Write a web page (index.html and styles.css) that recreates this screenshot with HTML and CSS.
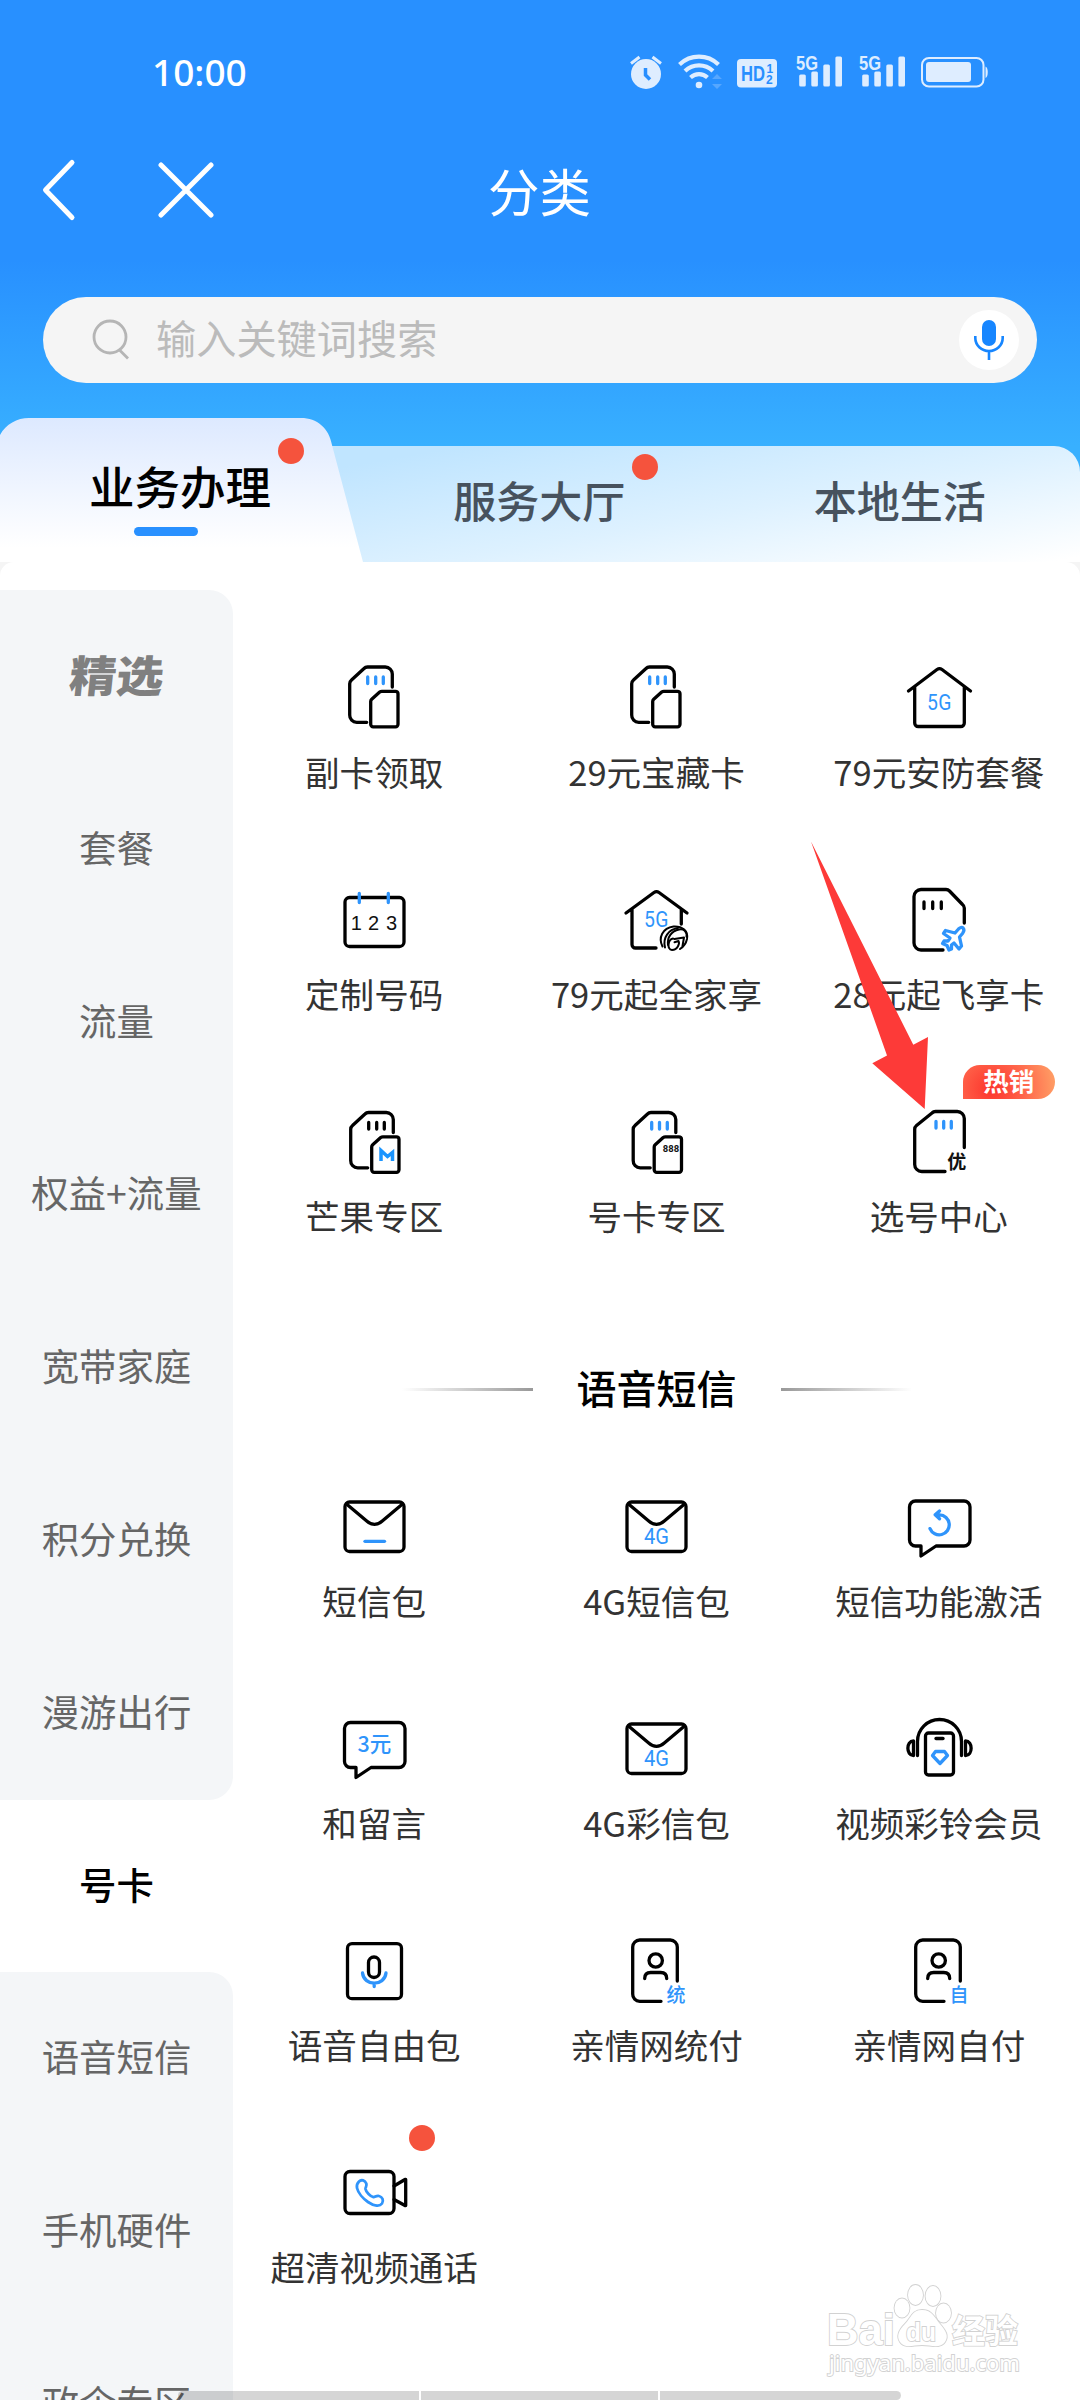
FILE: index.html
```html
<!DOCTYPE html>
<html lang="zh-CN">
<head>
  <meta charset="UTF-8">
  <title>分类</title>
  <link rel="stylesheet" href="styles.css">
</head>
<body>
  <!-- Shared icon shapes -->
  <svg class="sprite" width="0" height="0">
    <symbol id="sim-double" viewBox="0 0 72 72">
      <path d="M54.3 26V13a7 7 0 0 0-7-7H29.5a5 5 0 0 0-3.5 1.500L13.500 19a5 5 0 0 0-1.800 3.800V54a7 7 0 0 0 7 7.300h10" />
      <path d="M44 30.300h13.500a2.500 2.500 0 0 1 2.500 2.500v30.500a2.500 2.500 0 0 1-2.500 2.500H35.200a2.500 2.500 0 0 1-2.500-2.500V40.500a3 3 0 0 1 1-2.200l8-7.200a3.500 3.500 0 0 1 2.300-.8z" />
    </symbol>
    <symbol id="envelope" viewBox="0 0 72 72">
      <rect x="7" y="12" width="59" height="49.500" rx="4.500" />
      <path d="M8.500 14 29 31.300c4.500 4 10.500 4 15 0L64.500 14" />
    </symbol>
    <symbol id="bubble" viewBox="0 0 72 72">
      <path d="M12.500 11h48.500a6 6 0 0 1 6 6v33a6 6 0 0 1-6 6H33L18 66V56h-5.500a6 6 0 0 1-6-6V17a6 6 0 0 1 6-6z" />
    </symbol>
    <symbol id="person-card" viewBox="0 0 72 72">
      <path d="M57.300 47V13a7 7 0 0 0-7-7H19.700a7 7 0 0 0-7 7v47a7 7 0 0 0 7 7.300H41" />
      <circle cx="35.700" cy="26.500" r="6.700" />
      <path d="M24.700 44.500c0-4 2.500-6 6-6h10c3.500 0 6 2 6 6" />
    </symbol>
  </svg>

  <div class="page">
    <header class="header">
      <!-- Status bar -->
      <div class="status-bar">
        <span class="time">10:00</span>
        <div class="status-icons">
          <svg class="alarm" width="32" height="35" viewBox="0 0 32 35">
            <circle cx="16" cy="20" r="15" />
            <path d="M1 9.500 9.500 3M31 9.500 22.500 3" fill="none" stroke="#deedff" stroke-width="3" />
            <path d="M15.500 14v7l4.500 4.500" fill="none" stroke="#288fff" stroke-width="3.500" />
          </svg>
          <svg class="wifi" width="44" height="35" viewBox="0 0 44 35">
            <g fill="none" stroke="#deedff" stroke-width="4.200">
              <path d="M1.500 10.500c11-10.500 28-10.500 39 0" />
              <path d="M7 17c8-7.500 20-7.500 28 0" />
              <path d="M12.500 23.500c5-4.500 12-4.500 17 0" />
            </g>
            <circle cx="21" cy="31" r="3.300" />
            <path d="m34 25 5-5 5 5zM34 30h10l-5 5z" opacity=".25" />
          </svg>
          <svg class="hd" width="40" height="29" viewBox="0 0 40 29">
            <rect width="40" height="28.500" rx="4" />
            <g fill="#288fff" font-weight="bold">
              <text x="4" y="22" font-size="22" textLength="24" lengthAdjust="spacingAndGlyphs">HD</text>
              <text x="29.500" y="13.500" font-size="12">1</text>
              <text x="29" y="25" font-size="12">2</text>
            </g>
          </svg>
          <svg class="signal" width="46" height="33" viewBox="0 0 46 33">
            <text x="0" y="15.500" font-size="20" font-weight="bold" textLength="22" lengthAdjust="spacingAndGlyphs">5G</text>
            <rect x="3.200" y="20.500" width="6.600" height="12" rx="1.500" />
            <rect x="15.300" y="17.500" width="6.600" height="15" rx="1.500" />
            <rect x="27.300" y="10.500" width="6.600" height="22" rx="1.500" />
            <rect x="39.400" y="2.500" width="6.600" height="30" rx="1.500" />
          </svg>
          <svg class="signal second" width="46" height="33" viewBox="0 0 46 33">
            <text x="0" y="15.500" font-size="20" font-weight="bold" textLength="22" lengthAdjust="spacingAndGlyphs">5G</text>
            <rect x="3.200" y="20.500" width="6.600" height="12" rx="1.500" />
            <rect x="15.300" y="17.500" width="6.600" height="15" rx="1.500" />
            <rect x="27.300" y="10.500" width="6.600" height="22" rx="1.500" />
            <rect x="39.400" y="2.500" width="6.600" height="30" rx="1.500" />
          </svg>
          <svg class="battery" width="68" height="31" viewBox="0 0 68 31">
            <rect x="1" y="1" width="61.500" height="28.500" rx="7" fill="none" stroke="#deedff" stroke-width="2" />
            <rect x="5" y="5" width="45" height="20" rx="3" />
            <path d="M64.500 9.500c3 1 3 10.500 0 11.500z" />
          </svg>
        </div>
      </div>

      <!-- Title bar -->
      <div class="title-bar">
        <svg class="back" width="34" height="64" viewBox="0 0 34 64" fill="none" stroke="#fff" stroke-width="5" stroke-linecap="round" stroke-linejoin="round">
          <path d="M30 4.500 3.500 32 30 59.500" />
        </svg>
        <svg class="close" width="56" height="56" viewBox="0 0 56 56" fill="none" stroke="#fff" stroke-width="5" stroke-linecap="round">
          <path d="m3 3 50 50M53 3 3 53" />
        </svg>
        <h1>分类</h1>
      </div>

      <!-- Search -->
      <div class="search">
        <svg width="38" height="42" viewBox="0 0 38 42" fill="none" stroke="#b5b5b5" stroke-width="2.800">
          <circle cx="18" cy="18" r="16" />
          <path d="m27.500 31 8.500 8.500" />
        </svg>
        <span class="placeholder">输入关键词搜索</span>
        <span class="mic">
          <svg width="32" height="42" viewBox="0 0 32 42">
            <rect x="9" y="1" width="14" height="26" rx="7" fill="#1786ff" />
            <path d="M2.300 17v2a13.700 13 0 0 0 27.400 0v-2M16 32v9" fill="none" stroke="#1786ff" stroke-width="2.600" />
          </svg>
        </span>
      </div>

      <!-- Tabs -->
      <nav class="tabs">
        <div class="tab-active">
          <span>业务办理</span>
          <i class="underline"></i>
          <i class="dot"></i>
        </div>
        <div class="tabs-rest">
          <div class="tab">服务大厅<i class="dot"></i></div>
          <div class="tab">本地生活</div>
        </div>
      </nav>
    </header>

    <main class="content">
      <aside class="sidebar">
        <div class="side-item first"><b>精选</b></div>
        <div class="side-item">套餐</div>
        <div class="side-item">流量</div>
        <div class="side-item">权益+流量</div>
        <div class="side-item">宽带家庭</div>
        <div class="side-item">积分兑换</div>
        <div class="side-item before">漫游出行</div>
        <div class="side-item current">号卡</div>
        <div class="side-item after">语音短信</div>
        <div class="side-item">手机硬件</div>
        <div class="side-item">政企专区</div>
      </aside>

      <section class="services">
        <div class="grid">
          <div class="item">
            <svg class="icon" viewBox="0 0 72 72">
              <use href="#sim-double" />
              <path class="blue" d="M29.700 16v6.500M37.700 16v6.500M45.300 16v6.500" />
            </svg>
            <span>副卡领取</span>
          </div>
          <div class="item">
            <svg class="icon" viewBox="0 0 72 72">
              <use href="#sim-double" />
              <path class="blue" d="M29.700 16v6.500M37.700 16v6.500M45.300 16v6.500" />
            </svg>
            <span>29元宝藏卡</span>
          </div>
          <div class="item">
            <svg class="icon" viewBox="0 0 72 72">
              <path d="M5.500 30 34 8.500q2.500-1.800 5 0L67.500 30M11.700 26v36a3.500 3.500 0 0 0 3.500 3.500h42.600a3.500 3.500 0 0 0 3.500-3.500V26" />
              <text class="t-blue" x="36.500" y="49" font-size="21.500" letter-spacing=".5" textLength="25" lengthAdjust="spacingAndGlyphs">5G</text>
            </svg>
            <span>79元安防套餐</span>
          </div>
          <div class="item">
            <svg class="icon" viewBox="0 0 72 72">
              <rect x="7" y="14.500" width="59" height="49" rx="4.500" />
              <path class="blue" d="M21.300 10.500v9M50.300 10.500v9" />
              <g class="t-black t-wide" font-size="20">
                <text x="18.200" y="46.500">1</text>
                <text x="35.500" y="46.500">2</text>
                <text x="53.500" y="46.500">3</text>
              </g>
            </svg>
            <span>定制号码</span>
          </div>
          <div class="item">
            <svg class="icon" viewBox="0 0 72 72">
              <path d="M6 30 34 9.500q2.500-1.800 5 0L67 30M12 26v35.500a3.500 3.500 0 0 0 3.500 3.500H36M61.300 26v15" />
              <text class="t-blue" x="36.500" y="44" font-size="21.500" letter-spacing=".5" textLength="25" lengthAdjust="spacingAndGlyphs">5G</text>
              <g stroke-width="2">
                <path d="M42.500 63.500c-4.500-9 0-18.500 11-20 9-.5 15 4.500 13.500 12.500-1 4.500-3 7.500-7 10" />
                <path d="M45 64.500c-2.500-10 3.500-18 13-19.500" />
                <path d="M48 62c-1-8 3.500-14 11-15.500 5-1 8 2 7.500 7" />
                <path d="M53 55.500c-5 1-6.500 11-1 11.500 5.500 0 8-6.500 6.500-9l-4 1.200M54.500 56l9.500-1.500-1.500 8.500" />
              </g>
            </svg>
            <span>79元起全家享</span>
          </div>
          <div class="item">
            <svg class="icon" viewBox="0 0 72 72">
              <path d="M61.300 40V25a4.500 4.500 0 0 0-1.800-3.500L46.500 8a5 5 0 0 0-3.500-1.500H18a7 7 0 0 0-7 7V60a7 7 0 0 0 7 7h22" />
              <path d="M21 19v6.500M29.700 19v6.500M38.300 19v6.500" />
              <path class="blue" d="M60 45c1.500 1.500 1 3.500-.5 5.500L56.500 54l2 9-2.500 3-5-6-2.500 2v4l-2.500 1-2-4.500-4.500-2 1.500-2.500h4l2-3-6.500-4.500 2-3 9.500 2.500 3.500-4c1.500-1.500 3.500-2 4.500-1z" />
            </svg>
            <span>28元起飞享卡</span>
          </div>
          <div class="item">
            <svg class="icon" viewBox="0 0 72 72">
              <use href="#sim-double" x="1" y="1.500" />
              <path d="M30.700 17.500V24M38.700 17.500V24M46.300 17.500V24" />
              <path d="M43 56V45.500l6.500 6 5-4V56" fill="none" stroke="#1b95ff" stroke-width="3.500" stroke-linecap="butt" stroke-linejoin="miter" />
            </svg>
            <span>芒果专区</span>
          </div>
          <div class="item">
            <svg class="icon" viewBox="0 0 72 72">
              <use href="#sim-double" x="1.500" y="1.500" />
              <path class="blue" d="M31.700 17.500V24M39.500 17.500V24M47.300 17.500V24" />
              <text class="t-black" x="51" y="47" font-size="9.500" font-weight="bold">888</text>
            </svg>
            <span>号卡专区</span>
          </div>
          <div class="item">
            <em class="hot">热销</em>
            <svg class="icon" viewBox="0 0 72 72">
              <path d="M61.300 42.500V13.500a7 7 0 0 0-7-7H32.500A5 5 0 0 0 29 8L13.500 20.500a5 5 0 0 0-1.800 3.800V59.500a7 7 0 0 0 7 7H42" />
              <path class="blue" d="M33 16.500V23M40.700 16.500V23M48.300 16.500V23" />
              <text class="t-black cjk strong" x="53.700" y="64" font-size="19">优</text>
            </svg>
            <span>选号中心</span>
          </div>
        </div>

        <h2 class="section-title"><i class="line left"></i>语音短信<i class="line right"></i></h2>

        <div class="grid">
          <div class="item">
            <svg class="icon" viewBox="0 0 72 72">
              <use href="#envelope" />
              <path class="blue" d="M27 51.300h19.500" />
            </svg>
            <span>短信包</span>
          </div>
          <div class="item">
            <svg class="icon" viewBox="0 0 72 72">
              <use href="#envelope" />
              <text class="t-blue" x="36.500" y="54" font-size="21.500" textLength="25" lengthAdjust="spacingAndGlyphs">4G</text>
            </svg>
            <span>4G短信包</span>
          </div>
          <div class="item">
            <svg class="icon" viewBox="0 0 72 72">
              <use href="#bubble" />
              <path class="blue" d="M27 38.600a10 10 0 1 0 9.500-13.800h-4M36.500 21l-4.300 3.800 4.300 4" />
            </svg>
            <span>短信功能激活</span>
          </div>
          <div class="item">
            <svg class="icon" viewBox="0 0 72 72">
              <use href="#bubble" y="-.5" />
              <text class="t-blue cjk" x="36.500" y="39.500" font-size="21.500">3元</text>
            </svg>
            <span>和留言</span>
          </div>
          <div class="item">
            <svg class="icon" viewBox="0 0 72 72">
              <use href="#envelope" />
              <text class="t-blue" x="36.500" y="54" font-size="21.500" textLength="25" lengthAdjust="spacingAndGlyphs">4G</text>
            </svg>
            <span>4G彩信包</span>
          </div>
          <div class="item">
            <svg class="icon" viewBox="0 0 72 72">
              <path d="M14.500 43.500V29.500a22 22 0 0 1 44 0v14" />
              <path d="M10.500 29v14.500c-7.500 0-7.500-14.500 0-14.500zM62.500 29v14.500c7.500 0 7.500-14.500 0-14.500z" />
              <rect x="22.500" y="21" width="28" height="42" rx="3" />
              <path d="M33 26.500h7" />
              <path class="blue" d="M32.500 39.500h9l3 4L37 51.500 29.500 43.500z" />
            </svg>
            <span>视频彩铃会员</span>
          </div>
          <div class="item">
            <svg class="icon" viewBox="0 0 72 72">
              <rect x="9.500" y="9.700" width="54" height="55" rx="4.500" />
              <rect x="30.500" y="23" width="11" height="20.500" rx="5.500" />
              <path class="blue" d="M24.500 39c1.500 13.500 22 13.500 23.500 0M36.200 49.500v3" />
            </svg>
            <span>语音自由包</span>
          </div>
          <div class="item">
            <svg class="icon" viewBox="0 0 72 72">
              <use href="#person-card" />
              <text class="t-blue cjk" x="56" y="67.500" font-size="19">统</text>
            </svg>
            <span>亲情网统付</span>
          </div>
          <div class="item">
            <svg class="icon" viewBox="0 0 72 72">
              <use href="#person-card" />
              <text class="t-blue cjk" x="56" y="67.500" font-size="19">自</text>
            </svg>
            <span>亲情网自付</span>
          </div>
          <div class="item">
            <i class="dot"></i>
            <svg class="icon" viewBox="0 0 72 72">
              <rect x="7" y="15.500" width="49" height="42" rx="5" />
              <path d="m56 30 11-6.500h.7v26H67L56 43.500" />
              <path class="blue thin" d="M21 25.500c2.500-2.500 6-1 7.300 2 .8 2.500-1 3.800-.8 5.500.5 3 5 7.500 8 8.200 1.500.2 3-2 5.500-1.200 3.500 1 5 4.500 3 7.500-3 4-9.500 1.500-14-1.500-5-3.500-10-9.500-11-14-.5-2.500 0-4.500 2-6.500z" />
            </svg>
            <span>超清视频通话</span>
          </div>
        </div>
      </section>
    </main>

    <!-- Pointer -->
    <svg class="pointer" width="120" height="270" viewBox="811 842 120 270">
      <path d="M811 842.500 913.300 1045.700 928 1038 924.700 1110 872.300 1064.300 887 1056.400z" fill="#fd3a38" />
    </svg>

    <!-- Watermark -->
    <svg class="watermark" width="210" height="100" viewBox="820 2280 210 100">
      <g fill="#fff" stroke="#d2d2d2" stroke-width="1.800" paint-order="stroke">
        <text x="827" y="2345" font-size="45" font-weight="bold" textLength="68" lengthAdjust="spacingAndGlyphs">Bai</text>
        <ellipse cx="902" cy="2308" rx="7.500" ry="9.500" />
        <ellipse cx="915.500" cy="2295" rx="7.500" ry="10" />
        <ellipse cx="933" cy="2296" rx="7.500" ry="10" />
        <ellipse cx="943.500" cy="2313" rx="7.500" ry="9.500" />
        <path d="M922 2310c10 0 13 8 18 14 6 7 9 12 5 18-5 7-14 3-23 3s-17 4-22-3c-4-6-1-12 5-18 6-6 7-14 17-14z" />
        <text x="906" y="2341" font-size="26" font-weight="bold" textLength="30" lengthAdjust="spacingAndGlyphs">du</text>
        <text class="cjk-mark" x="952" y="2343" font-size="33" font-weight="bold">经验</text>
        <text class="url" x="829" y="2371" font-size="21" textLength="191" lengthAdjust="spacingAndGlyphs">jingyan.baidu.com</text>
      </g>
    </svg>

    <div class="bottom-bar"><i></i><i></i><i></i></div>
  </div>
</body>
</html>
```

FILE: styles.css
```css
body {
  margin: 0;
  padding: 0;
  background: #f5f5f5;
  font-family: 'Noto Sans CJK SC', sans-serif;
}

.sprite {
  display: block;
}

.page {
  position: relative;
  width: 1080px;
  height: 2400px;
  overflow: hidden;
}

/* Header */
.header {
  display: flex;
  flex-direction: column;
  height: 562px;
  background: linear-gradient(#2890ff 260px, #38b0ff 446px);
}

.status-bar {
  display: flex;
  justify-content: space-between;
  height: 144px;
  padding: 0 91px 0 152px;
  box-sizing: border-box;
}

.time {
  color: #fff;
  font-family: 'Noto Sans', sans-serif;
  font-size: 37px;
  font-weight: 500;
  line-height: 144px;
}

.status-icons {
  display: flex;
  align-items: flex-start;
  padding-top: 54px;
  fill: #deedff;
  font-family: 'Liberation Sans', sans-serif;
}

.wifi {
  margin-left: 16px;
}

.hd {
  margin: 5px 0 0 15px;
}

.signal {
  margin-left: 19px;
}

.signal.second {
  margin-left: 17px;
}

.battery {
  margin: 3px 0 0 16px;
}

.title-bar {
  display: flex;
  align-items: center;
  height: 92px;
  padding-left: 42px;
}

.close {
  margin-left: 82px;
}

.title-bar h1 {
  margin: 0 0 0 274px;
  color: #fff;
  font-size: 51.500px;
  font-weight: 400;
  line-height: 90px;
}

.search {
  display: flex;
  align-items: center;
  height: 86px;
  margin: 61px 43px 35px;
  padding: 0 18px 0 49px;
  border-radius: 43px;
  background: #f5f5f5;
}

.placeholder {
  flex: 1;
  margin: -7px 0 0 26px;
  color: #bbb;
  font-size: 40.200px;
  line-height: 80px;
}

.mic {
  display: flex;
  align-items: center;
  justify-content: center;
  width: 60px;
  height: 60px;
  border-radius: 50%;
  background: #fff;
}

/* Tabs */
.tabs {
  display: flex;
  align-items: flex-end;
  height: 144px;
}

.tab-active {
  position: relative;
  z-index: 1;
  display: flex;
  flex-direction: column;
  align-items: center;
  width: 360px;
  height: 144px;
  padding-right: 3px;
  margin-right: -43px;
  background: linear-gradient(#dde9ff, #fff 90%);
  clip-path: path('M0 17C6 6 17 0 29 0H301C317 0 329 10 332 27L363 144H0Z');
  color: #000;
  font-size: 45.500px;
  font-weight: 500;
}

.tab-active span {
  line-height: 60px;
  margin-top: 37px;
}

.underline {
  width: 64px;
  height: 9px;
  margin: 12px 28px 0 0;
  border-radius: 5px;
  background: #2890ff;
}

.tabs-rest {
  display: flex;
  flex: 1;
  height: 116px;
  padding-left: 39px;
  border-radius: 0 26px 0 0;
  background: linear-gradient(170deg, #c0e5ff 10%, #ddf1ff 55%, #fff 98%);
}

.tab {
  position: relative;
  flex: 1;
  color: #47525e;
  font-size: 43px;
  font-weight: 500;
  line-height: 107px;
  text-align: center;
}

.dot {
  position: absolute;
  width: 26px;
  height: 26px;
  border-radius: 50%;
  background: #f5533d;
}

.tab-active .dot {
  top: 20px;
  left: 278px;
}

.tab .dot {
  top: 8px;
  right: 62px;
}

/* Content */
.content {
  display: flex;
  height: 1838px;
  border-radius: 14px 14px 0 0;
  background: #fff;
}

.sidebar {
  width: 233px;
  padding-top: 28px;
}

.side-item {
  height: 172.800px;
  background: #f4f6f8;
  color: #666;
  font-size: 37.400px;
  line-height: 169px;
  text-align: center;
}

.side-item b {
  display: inline-block;
  color: #808080;
  font-size: 47px;
  font-weight: 900;
  line-height: 167px;
  transform: skewX(-6deg) scaleY(.92);
}

.side-item.first,
.side-item.after {
  border-top-right-radius: 24px;
}

.side-item.before {
  border-bottom-right-radius: 24px;
}

.side-item.current {
  background: #fff;
  color: #000;
  font-weight: 500;
}

.services {
  width: 847px;
  padding-top: 99px;
}

.grid {
  display: grid;
  grid-template-columns: repeat(3, 1fr);
  grid-auto-rows: 222px;
}

.item {
  position: relative;
  display: flex;
  flex-direction: column;
  align-items: center;
  color: #333;
  font-size: 34.560px;
  line-height: 40px;
  white-space: nowrap;
}

.item span {
  margin-top: 18px;
}

.icon {
  width: 72px;
  height: 72px;
  fill: none;
  stroke: #000;
  stroke-width: 3.300;
  stroke-linecap: round;
  stroke-linejoin: round;
}

.icon .blue {
  stroke: #2f94fb;
}

.icon .thin {
  stroke-width: 2.800;
}

.icon text {
  stroke: none;
  text-anchor: middle;
  font-family: Roboto, sans-serif;
}

.icon .t-wide text {
  font-family: 'Liberation Sans', sans-serif;
}

.t-blue {
  fill: #2f94fb;
}

.t-black {
  fill: #111;
}

.icon text.cjk {
  font-family: 'Noto Sans CJK SC', sans-serif;
  font-weight: 500;
}

.icon text.strong {
  font-weight: 700;
}

.item .dot {
  top: -31px;
  left: 176px;
}

.hot {
  position: absolute;
  top: -40px;
  left: 165px;
  width: 92px;
  height: 34px;
  border-radius: 17px 17px 17px 0;
  background: radial-gradient(circle at 28px 24px, #fc342c, #ff6048 45%, #ffa468 100%);
  color: #fff;
  font-size: 25.500px;
  font-style: normal;
  font-weight: 700;
  line-height: 29px;
  text-align: center;
}

.section-title {
  display: flex;
  align-items: center;
  justify-content: center;
  height: 119px;
  margin: 0;
  padding-bottom: 43.500px;
  color: #000;
  font-size: 40px;
  font-weight: 500;
}

.line {
  width: 131px;
  height: 3px;
  margin: 6px 44px 0;
}

.line.left {
  background: linear-gradient(90deg, #fff, #999);
}

.line.right {
  background: linear-gradient(90deg, #999, #fff);
}

/* Overlays */
.pointer {
  position: absolute;
  top: 841px;
  left: 811px;
}

.watermark {
  position: absolute;
  top: 2280px;
  left: 820px;
  font-family: 'Liberation Sans', sans-serif;
}

.cjk-mark {
  font-family: 'Noto Sans CJK SC', sans-serif;
}

.url {
  font-family: 'Noto Sans', sans-serif;
}

.bottom-bar {
  position: absolute;
  bottom: 0;
  left: 178px;
  display: grid;
  grid-template-columns: 241px 237px 241px;
  gap: 2px;
  width: 723px;
  height: 9px;
  border-radius: 5px;
  overflow: hidden;
}

.bottom-bar i {
  background: rgba(0, 0, 0, 0.165);
}
```
